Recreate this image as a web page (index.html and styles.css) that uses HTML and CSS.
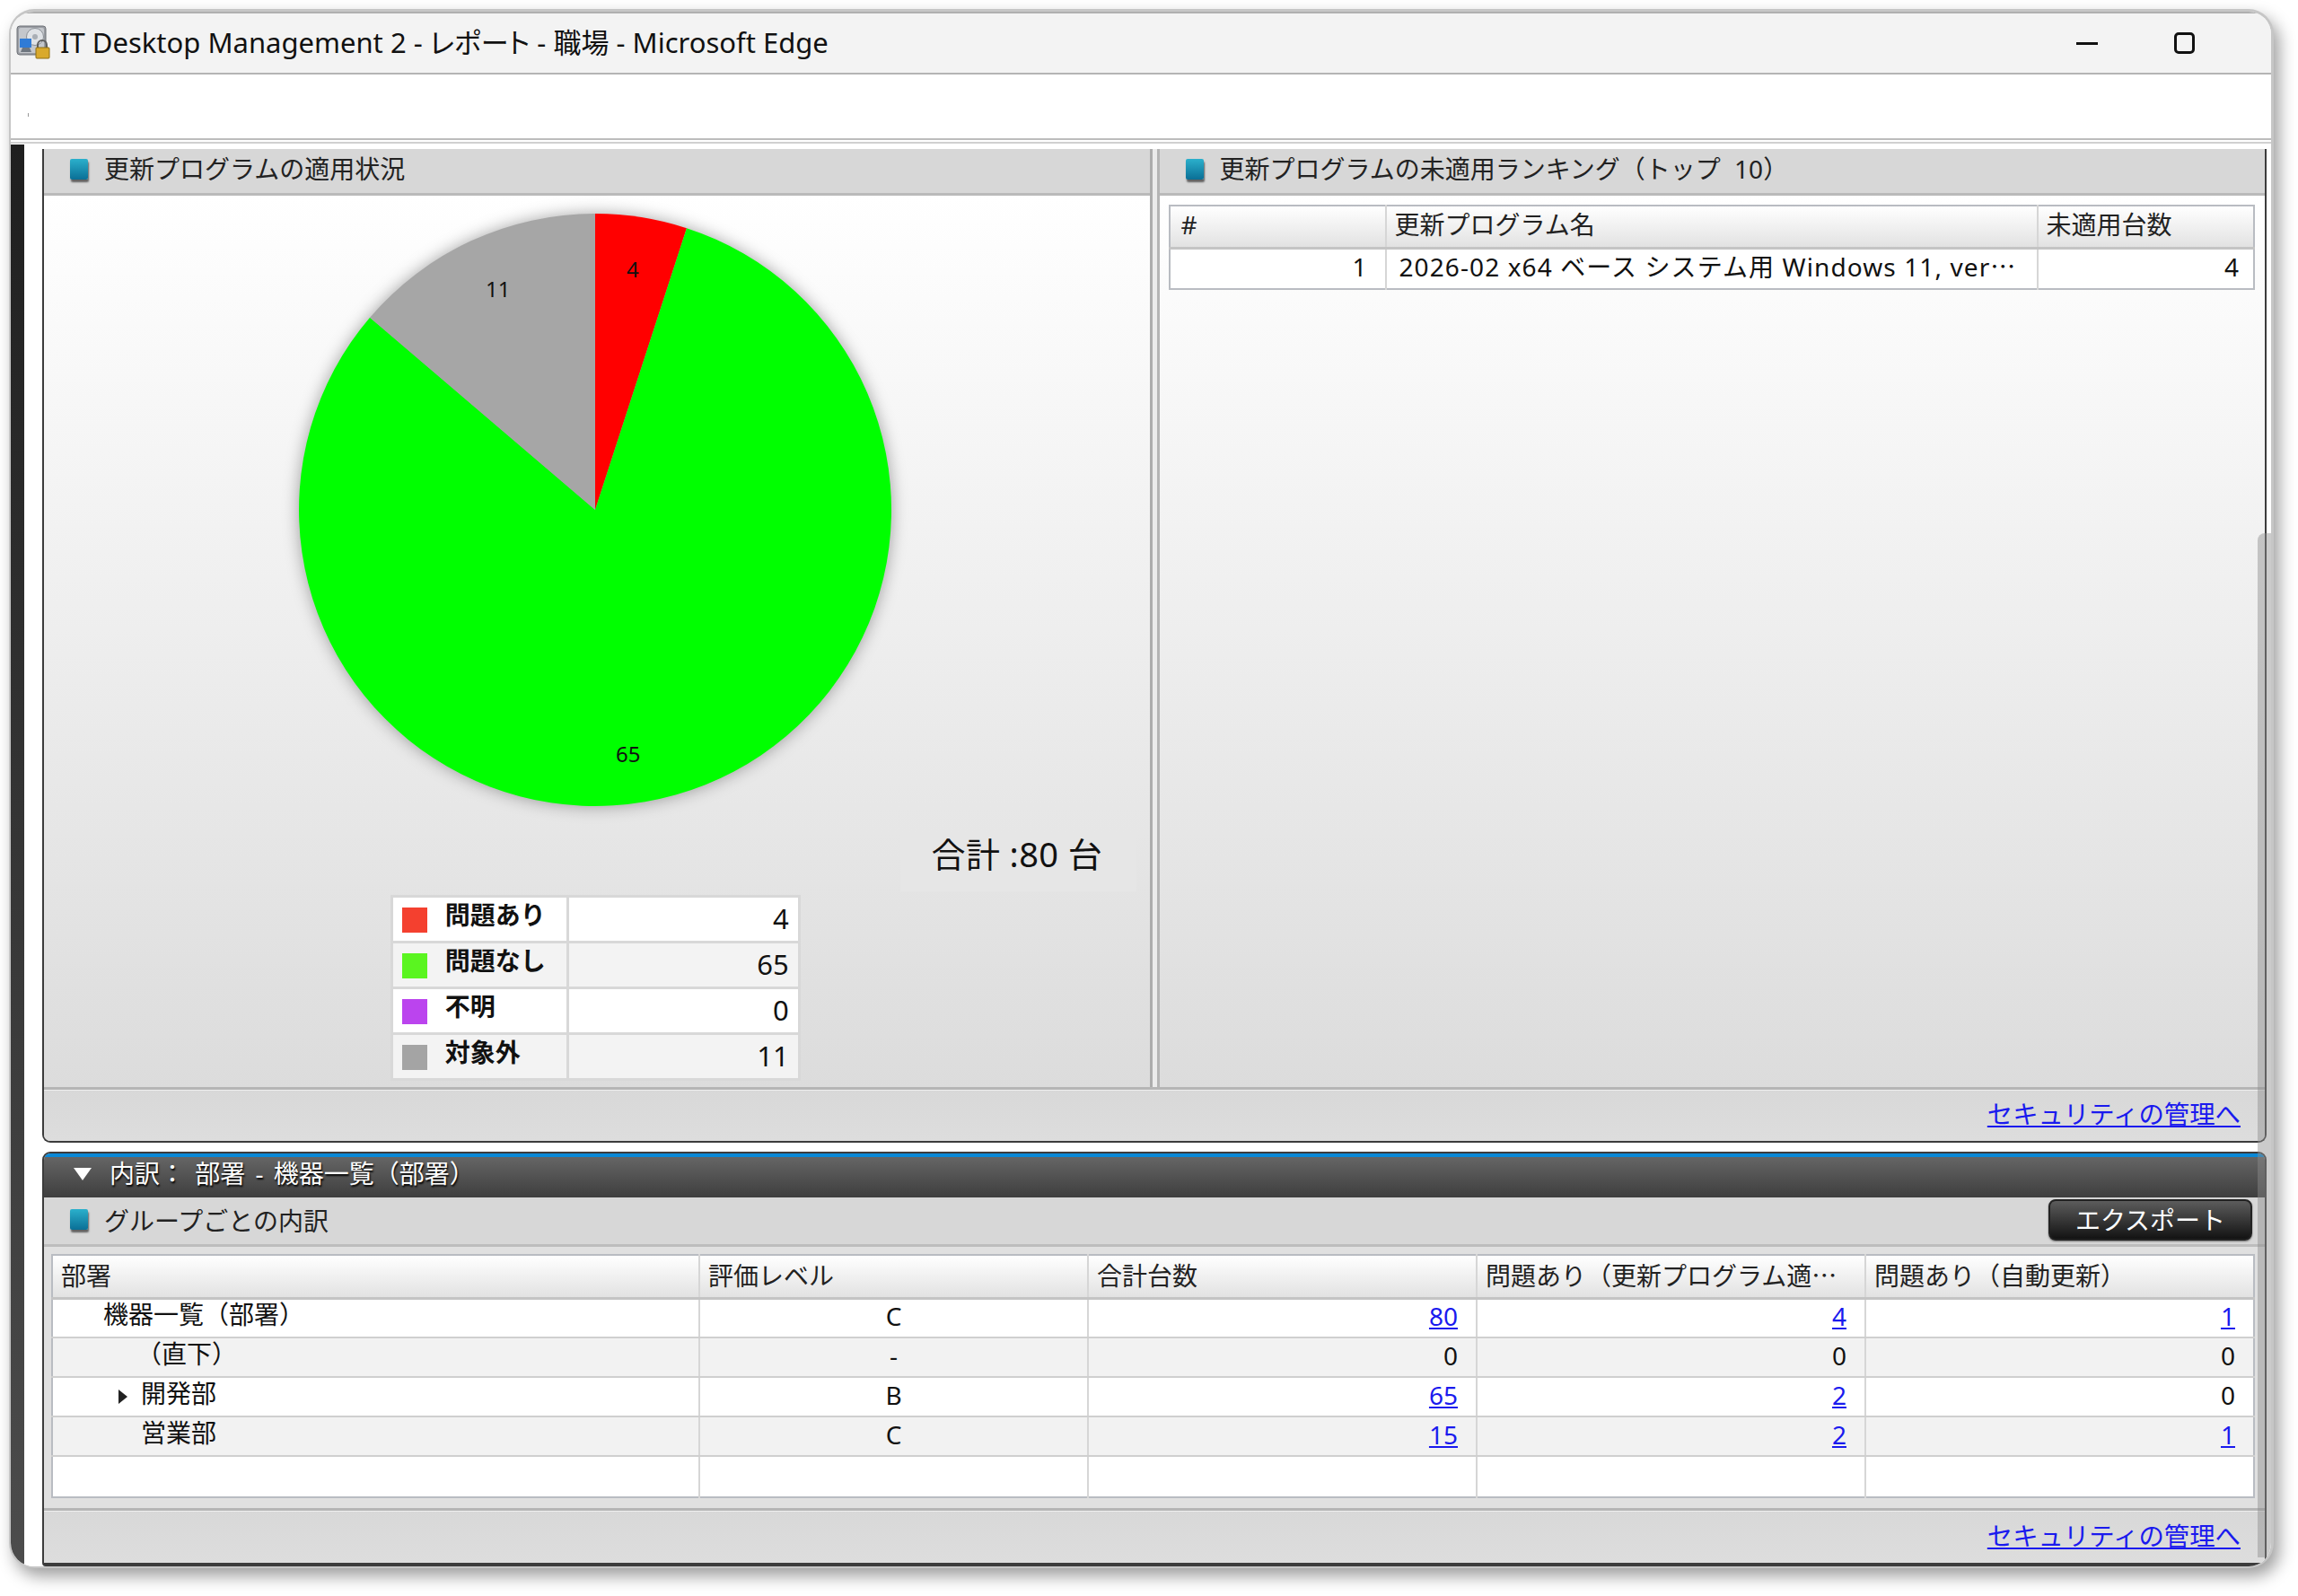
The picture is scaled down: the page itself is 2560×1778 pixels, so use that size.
FILE: index.html
```html
<!DOCTYPE html>
<html lang="ja">
<head>
<meta charset="utf-8">
<title>IT Desktop Management 2 - レポート - 職場 - Microsoft Edge</title>
<link rel="stylesheet" href="styles.css">
</head>
<body>
<div class="window">
  <header class="titlebar">
    <svg class="app-icon" viewBox="0 0 40 40" width="40" height="40">
      <rect x="1" y="1" width="32" height="32" rx="3" fill="#9a9da3" stroke="#6d7076"/>
      <rect x="3" y="3" width="28" height="28" rx="2" fill="#c4c7cc"/>
      <circle cx="21" cy="13" r="9.5" fill="#dfe2e6" stroke="#8b9096"/>
      <circle cx="21" cy="13" r="3" fill="#a9aeb5"/>
      <path d="M4 15h13v10H4z" fill="#2f7bd6"/>
      <path d="M7 25h8l2 5H5z" fill="#6f7780"/>
      <path d="M24 26v-4a5 5 0 0 1 10 0v4" fill="none" stroke="#5e5e5e" stroke-width="2"/>
      <rect x="22" y="25" width="15" height="12" rx="1" fill="#d9a92c" stroke="#8d6c14"/>
    </svg>
    <span class="window-title">IT Desktop Management 2 - レポート - 職場 - Microsoft Edge</span>
    <div class="controls">
      <span class="ctl-min"></span>
      <span class="ctl-max"></span>
    </div>
  </header>
  <div class="addressbar"><span class="addr-mark"></span></div>
  <div class="content">
    <div class="sidebar"></div>
    <main class="panels">
      <section class="panel panel-top">
        <div class="split">
          <div class="pane">
            <h2 class="pane-head"><i class="cube"></i>更新プログラムの適用状況</h2>
            <div class="pane-body chart-body">
              <svg class="pie" viewBox="0 0 700 700" width="700" height="700">
                <g class="pie-slices">
                  <path d="M350 350V20A330 330 0 0 1 451.98 36.15Z" fill="#ff0000"/>
                  <path d="M350 350L451.98 36.15A330 330 0 1 1 99.07 135.7Z" fill="#00ff00"/>
                  <path d="M350 350L99.07 135.7A330 330 0 0 1 350 20Z" fill="#a6a6a6"/>
                </g>
                <text class="pie-label" x="385" y="91">4</text>
                <text class="pie-label" x="373" y="631">65</text>
                <text class="pie-label" x="228" y="113">11</text>
              </svg>
              <div class="total">合計 :80 台</div>
              <table class="legend">
                <tr><th><i class="swatch sw-red"></i>問題あり</th><td>4</td></tr>
                <tr class="alt"><th><i class="swatch sw-green"></i>問題なし</th><td>65</td></tr>
                <tr><th><i class="swatch sw-purple"></i>不明</th><td>0</td></tr>
                <tr class="alt"><th><i class="swatch sw-gray"></i>対象外</th><td>11</td></tr>
              </table>
            </div>
          </div>
          <div class="splitter"></div>
          <div class="pane">
            <h2 class="pane-head"><i class="cube"></i>更新プログラムの未適用ランキング（トップ 10）</h2>
            <div class="pane-body rank-body">
              <table class="grid rank">
                <colgroup><col class="c-rank-1"><col class="c-rank-2"><col></colgroup>
                <thead><tr><th>#</th><th>更新プログラム名</th><th>未適用台数</th></tr></thead>
                <tbody><tr><td class="num">1</td><td class="name">2026-02 x64 ベース システム用 Windows 11, ver⋯</td><td class="num">4</td></tr></tbody>
              </table>
            </div>
          </div>
        </div>
        <footer class="panel-foot"><a href="#">セキュリティの管理へ</a></footer>
      </section>

      <section class="panel panel-bottom">
        <div class="dark-head"><i class="down"></i>内訳： 部署 - 機器一覧（部署）</div>
        <div class="sub-head">
          <h2 class="sub-title"><i class="cube"></i>グループごとの内訳</h2>
          <button class="export" type="button">エクスポート</button>
        </div>
        <div class="breakdown">
          <table class="grid detail">
            <colgroup><col class="c-d-1"><col class="c-d-2"><col class="c-d-2"><col class="c-d-2"><col></colgroup>
            <thead><tr><th>部署</th><th>評価レベル</th><th>合計台数</th><th>問題あり（更新プログラム適⋯</th><th>問題あり（自動更新）</th></tr></thead>
            <tbody>
              <tr><td class="tree lv0">機器一覧（部署）</td><td class="mid">C</td><td class="num"><a href="#">80</a></td><td class="num"><a href="#">4</a></td><td class="num"><a href="#">1</a></td></tr>
              <tr class="alt"><td class="tree lv1">（直下）</td><td class="mid">-</td><td class="num">0</td><td class="num">0</td><td class="num">0</td></tr>
              <tr><td class="tree lv2"><i class="expander"></i>開発部</td><td class="mid">B</td><td class="num"><a href="#">65</a></td><td class="num"><a href="#">2</a></td><td class="num">0</td></tr>
              <tr class="alt"><td class="tree lv2">営業部</td><td class="mid">C</td><td class="num"><a href="#">15</a></td><td class="num"><a href="#">2</a></td><td class="num"><a href="#">1</a></td></tr>
              <tr class="empty"><td></td><td></td><td></td><td></td><td></td></tr>
            </tbody>
          </table>
        </div>
        <footer class="panel-foot"><a href="#">セキュリティの管理へ</a></footer>
      </section>
      <div class="thumb"></div>
    </main>
  </div>
</div>
</body>
</html>
```
FILE: styles.css
```css
* { box-sizing: border-box; }
html, body { margin: 0; padding: 0; background: #fff; }
body {
  width: 2560px;
  height: 1778px;
  overflow: hidden;
  font-family: "Noto Sans", "Noto Sans CJK JP", sans-serif;
  font-size: 28px;
  color: #111;
}
a { color: #1a1aee; text-decoration: underline; }

.window {
  margin: 10px 0 0 10px;
  width: 2523px;
  height: 1737px;
  display: flex;
  flex-direction: column;
  background: #fff;
  border: solid #c6c6c6;
  border-width: 3px 3px 2px 2px;
  border-radius: 28px;
  overflow: hidden;
  box-shadow: 6px 9px 18px rgba(0, 0, 0, .38);
}

.titlebar {
  height: 70px;
  flex: none;
  display: flex;
  align-items: center;
  padding-left: 6px;
  background: #f3f3f3;
  border-bottom: 2px solid #b4b4b4;
  border-top: 2px solid #b0b0b0;
}
.app-icon { flex: none; }
.window-title {
  margin-left: 9px;
  padding-bottom: 6px;
  font-size: 31px;
  font-feature-settings: "palt";
  color: #111;
  white-space: nowrap;
}
.controls {
  margin-left: auto;
  margin-right: 85px;
  display: flex;
  align-items: center;
  gap: 85px;
}
.ctl-min { width: 24px; height: 3px; background: #111; }
.ctl-max { width: 23px; height: 24px; border: 3px solid #111; border-radius: 5px; }

.addressbar {
  height: 73px;
  flex: none;
  background: #fff;
  border-bottom: 2px solid #bdbdbd;
  position: relative;
}
.addr-mark { position: absolute; left: 19px; top: 43px; width: 1px; height: 4px; background: #999; }

.content {
  flex: 1;
  display: flex;
  min-height: 0;
  border-top: 2px solid #d0d0d0;
  margin-top: 2px;
  background: #fff;
}
.sidebar {
  flex: none;
  width: 15px;
  background: linear-gradient(#1f1f1f, #4c4c4c);
  margin-top: 1px;
}
.panels {
  position: relative;
  flex: 1;
  min-width: 0;
  margin-left: 20px;
  padding: 6px 5px 0 0;
  display: flex;
  flex-direction: column;
  gap: 10px;
}
.panel {
  border: solid #3c3c3c;
  border-width: 0 2px 2px 2px;
  border-radius: 0 0 9px 9px;
  display: flex;
  flex-direction: column;
  overflow: hidden;
  background: #d9d9d9;
}
.panel-top { height: 1107px; flex: none; }
.panel-bottom { flex: 1; min-height: 0; border-top-width: 2px; border-radius: 9px 9px 4px 4px; border-bottom-width: 4px; }

.split { display: flex; height: 1045px; flex: none; }
.pane { flex: 1; min-width: 0; display: flex; flex-direction: column; }
.splitter {
  flex: none;
  width: 11px;
  background: #ebebeb;
  border-left: 3px solid #acacac;
  border-right: 3px solid #b4b4b4;
}
.pane-head, .sub-title {
  margin: 0;
  font-size: 28px;
  font-weight: 400;
  display: flex;
  align-items: center;
  color: #222;
}
.pane-head {
  height: 52px;
  flex: none;
  padding: 0 0 5px 29px;
  background: #d7d7d7;
  border-bottom: 3px solid #bababa;
  word-spacing: 8px;
  line-height: 36px;
}
.sub-title { padding-bottom: 3px; }
.cube {
  flex: none;
  width: 20px;
  height: 23px;
  margin-right: 18px;
  border-radius: 2px;
  background: linear-gradient(#2bb0cc, #0a6f96);
  box-shadow: 1px 3px 2px rgba(0, 0, 0, .55);
}
.pane-body {
  flex: 1;
  min-height: 0;
  background: linear-gradient(#fff, #dcdcdc);
}
.chart-body { display: flex; flex-direction: column; align-items: center; }
.pie { flex: none; margin-left: -3px; }
.pie-slices { filter: drop-shadow(0 0 9px rgba(0, 0, 0, .35)); }
.pie-label { font-size: 24px; font-family: "Noto Sans", sans-serif; fill: #111; }
.total {
  align-self: flex-end;
  margin-right: 15px;
  margin-top: 11px;
  width: 263px;
  height: 64px;
  padding-left: 35px;
  font-size: 38px;
  letter-spacing: .4px;
  line-height: 44px;
  white-space: nowrap;
  background: #e6e6e6;
  color: #111;
}
.legend {
  margin: 4px 3px 0 0;
  width: 457px;
  border-collapse: collapse;
  table-layout: fixed;
  background: #fff;
}
.legend tr { height: 51px; }
.legend th, .legend td { border: 3px solid #d8d8d8; padding: 0; }
.legend th {
  width: 196px;
  font-size: 28px;
  font-weight: 700;
  text-align: left;
  white-space: nowrap;
  line-height: 1;
  padding-bottom: 4px;
}
.legend td { text-align: right; padding: 0 10px 3px 0; font-size: 31px; line-height: 40px; }
.legend .alt th, .legend .alt td { background: #f3f3f3; }
.swatch {
  display: inline-block;
  vertical-align: middle;
  width: 28px;
  height: 28px;
  margin: 4px 20px 0 10px;
}
.sw-red { background: #f4402f; }
.sw-green { background: #5af520; }
.sw-purple { background: #bb44ee; }
.sw-gray { background: #a4a4a4; }

.rank-body { padding: 10px 11px 0 10px; }
.grid {
  width: 100%;
  border-collapse: collapse;
  table-layout: fixed;
  background: #fff;
  border: 2px solid #b9bcc2;
  line-height: 34px;
}
.grid th {
  font-weight: 400;
  text-align: left;
  padding: 0 9px 5px;
  background: linear-gradient(#fff, #e2e2e2);
  border-right: 2px solid #d6d6d6;
  border-bottom: 3px solid #c4c4c4;
  white-space: nowrap;
  overflow: hidden;
  color: #222;
}
.grid td {
  padding: 0 0 4px;
  border-right: 2px solid #d6d6d6;
  border-bottom: 2px solid #cfcfcf;
  white-space: nowrap;
  overflow: hidden;
}
.grid th:last-child, .grid td:last-child { border-right: 0; }
.grid tbody tr:last-child td { border-bottom: 0; }
.grid .num { text-align: right; padding-right: 20px; }
.grid .mid { text-align: center; }
.rank thead tr { height: 47px; }
.rank tbody tr { height: 46px; }
.rank th:first-child { padding-left: 12px; }
.rank .name { padding-left: 14px; letter-spacing: 1.1px; }
.rank td:last-child { padding-right: 16px; }
.c-rank-1 { width: 241px; }
.c-rank-2 { width: 726px; }

.panel-foot {
  flex: 1;
  min-height: 0;
  display: flex;
  align-items: center;
  justify-content: flex-end;
  padding: 0 27px 6px 0;
  font-size: 28.4px;
  border-top: 3px solid #b5b5b5;
  box-shadow: inset 0 1px 0 #efefef;
  background: linear-gradient(#d8d8d8, #dddddd);
}

.dark-head {
  height: 49px;
  flex: none;
  display: flex;
  align-items: center;
  padding: 0 0 12px 33px;
  color: #fff;
  font-size: 28px;
  word-spacing: 4px;
  white-space: nowrap;
  text-shadow: 1px 2px 2px #000;
  border-top: 4px solid #0a88d6;
  background: linear-gradient(#656565, #3e3e3e);
}
.down {
  width: 0;
  height: 0;
  margin-right: 20px;
  border-left: 10px solid transparent;
  border-right: 10px solid transparent;
  border-top: 14px solid #fff;
  margin-top: 4px;
}
.sub-head {
  height: 55px;
  flex: none;
  display: flex;
  align-items: center;
  justify-content: space-between;
  padding: 0 14px 0 29px;
  background: #d7d7d7;
  border-bottom: 3px solid #bdbdbd;
}
.export {
  width: 227px;
  height: 46px;
  padding: 0 0 4px;
  margin-bottom: 2px;
  font: inherit;
  font-size: 28px;
  color: #fff;
  border: 2px solid #222;
  border-radius: 8px;
  background: linear-gradient(#5c5c5c, #131313);
  box-shadow: 0 1px 2px rgba(0, 0, 0, .5);
}
.breakdown {
  flex: none;
  height: 291px;
  padding: 8px 11px 0 8px;
  background: #e0e0e0;
}
.detail { line-height: 28px; }
.detail thead tr { height: 48px; }
.detail th { padding-bottom: 2px; }
.detail tbody tr { height: 44px; }
.detail tbody .empty { height: 46px; }
.detail tr.alt td { background: #f2f2f2; }
.c-d-1 { width: 721px; }
.c-d-2 { width: 433px; }
.tree { position: relative; padding-bottom: 9px !important; }
.lv0 { padding-left: 56px !important; }
.lv1 { padding-left: 93px !important; }
.lv2 { padding-left: 98px !important; }
.expander {
  position: absolute;
  left: 73px;
  top: 13px;
  width: 0;
  height: 0;
  border-top: 8px solid transparent;
  border-bottom: 8px solid transparent;
  border-left: 10px solid #222;
}
.thumb {
  position: absolute;
  right: 0;
  top: 434px;
  bottom: 10px;
  width: 15px;
  border-radius: 8px 0 0 0;
  background: rgba(140, 140, 140, .45);
}
```
